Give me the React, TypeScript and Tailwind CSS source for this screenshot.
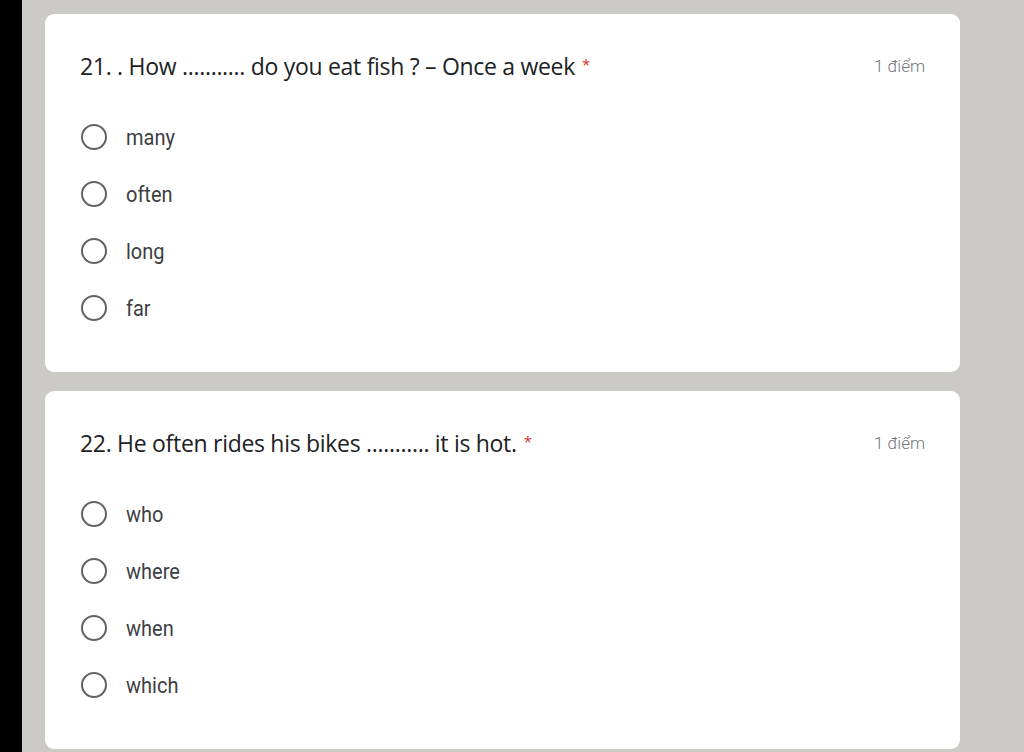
const QUESTIONS = [
  {
    title: '21. . How ........... do you eat fish ? – Once a week',
    options: ['many', 'often', 'long', 'far'],
  },
  {
    title: '22. He often rides his bikes ........... it is hot.',
    options: ['who', 'where', 'when', 'which'],
  },
];

const Radio = () => (
  <span className="block h-[26px] w-[26px] shrink-0 rounded-full border-[2.5px] border-[#5f6368]" />
);

const QuestionCard = ({ title, options }: { title: string; options: string[] }) => (
  <div className="rounded-[9px] bg-white px-[35px] pt-[38px] pb-[36px]">
    <div className="flex h-[28px] items-center justify-between">
      <div className="font-['Open_Sans',sans-serif] text-[23px] tracking-[-0.3px] text-[#202124]">
        {title}
        <span className="relative top-[-5px] ml-[7px] text-[15px] text-[#d93025]">*</span>
      </div>
      <div className="mt-[2px] font-['Roboto',sans-serif] text-[17px] font-light text-[#70757a]">1 điểm</div>
    </div>
    <ul className="mt-[28px]">
      {options.map((opt) => (
        <li key={opt} className="flex h-[57px] items-center gap-[19px] pl-[1px]">
          <Radio />
          <span className="inline-block scale-y-[1.12] font-['Roboto',sans-serif] text-[20px] text-[#3c4043]">
            {opt}
          </span>
        </li>
      ))}
    </ul>
  </div>
);

export default function App() {
  return (
    <div className="flex h-[752px] w-[1024px] overflow-hidden bg-[#cbcac6]">
      <div className="w-[22px] shrink-0 bg-black" />
      <div className="box-content flex w-[915px] flex-col gap-[19px] pt-[14px] pl-[23px]">
        {QUESTIONS.map((q) => (
          <QuestionCard key={q.title} title={q.title} options={q.options} />
        ))}
      </div>
    </div>
  );
}
